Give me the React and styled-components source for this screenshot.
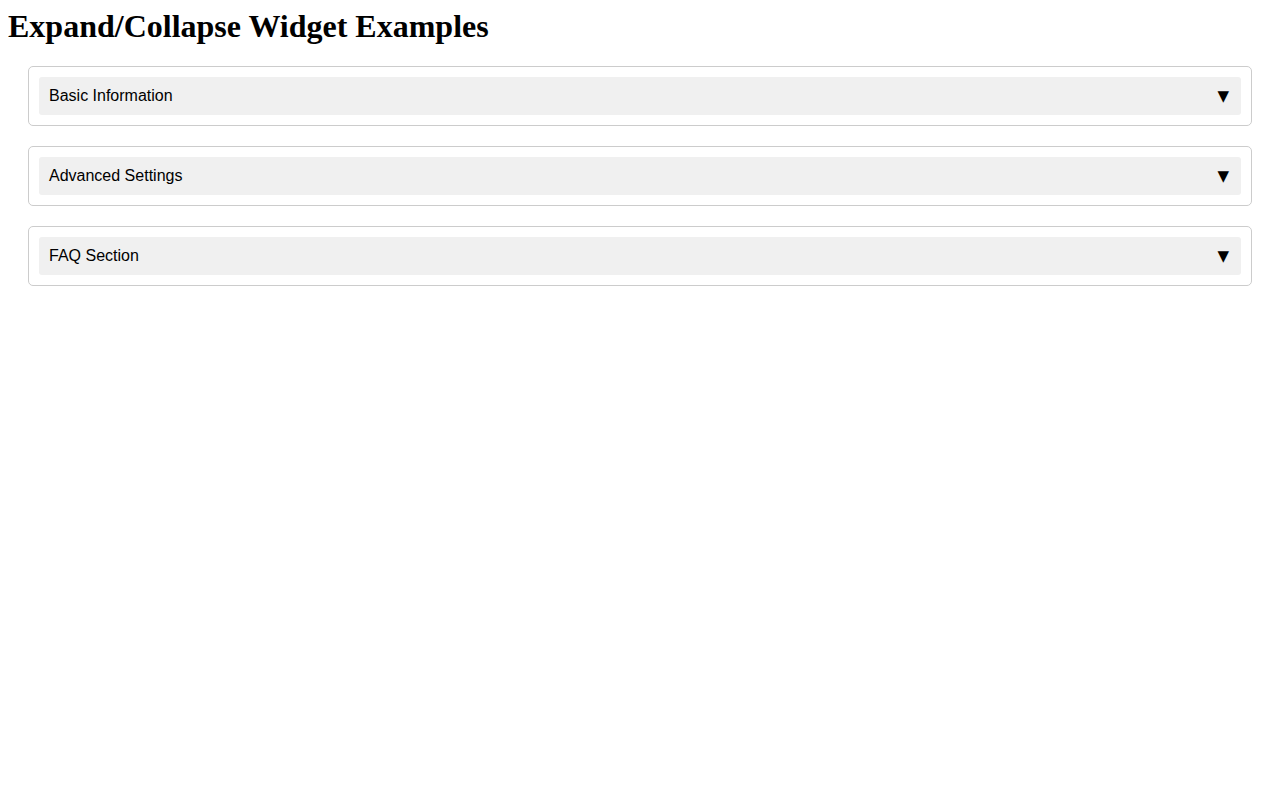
import React, { useState } from 'react'
import styled, { createGlobalStyle } from 'styled-components'

const GlobalStyle = createGlobalStyle`
  body {
    margin: 8px;
    background: #fff;
    color: #000;
  }
`

const sections = [
  { title: 'Basic Information', body: 'Name, email and other basic details.' },
  { title: 'Advanced Settings', body: 'Configure advanced options here.' },
  { title: 'FAQ Section', body: 'Frequently asked questions.' },
]

function Collapsible({ title, children }) {
  const [open, setOpen] = useState(false)
  return (
    <Card>
      <Header onClick={() => setOpen(!open)}>
        <span>{title}</span>
        <Arrow>{open ? '▲' : '▼'}</Arrow>
      </Header>
      {open && <Content>{children}</Content>}
    </Card>
  )
}

export default function App() {
  return (
    <>
      <GlobalStyle />
      <Title>Expand/Collapse Widget Examples</Title>
      {sections.map((s) => (
        <Collapsible key={s.title} title={s.title}>
          {s.body}
        </Collapsible>
      ))}
    </>
  )
}

//styles
const Title = styled.h1`
  margin: 0 0 0.67em;
  font-family: "Liberation Serif", "Times New Roman", serif;
  font-size: 32px;
  font-weight: bold;
`

const Card = styled.div`
  margin: 20px;
  padding: 10px;
  border: 1px solid #ccc;
  border-radius: 5px;
  font-family: "Liberation Sans", Arial, sans-serif;
  font-size: 16px;
`

const Header = styled.div`
  display: flex;
  justify-content: space-between;
  align-items: center;
  padding: 10px;
  background: #f0f0f0;
  border-radius: 3px;
  cursor: pointer;
  user-select: none;
`

const Arrow = styled.span`
  margin-right: 2px;
  font-family: "DejaVu Sans", sans-serif;
  font-size: 15px;
  line-height: 17px;
`

const Content = styled.div`
  padding: 10px;
`
